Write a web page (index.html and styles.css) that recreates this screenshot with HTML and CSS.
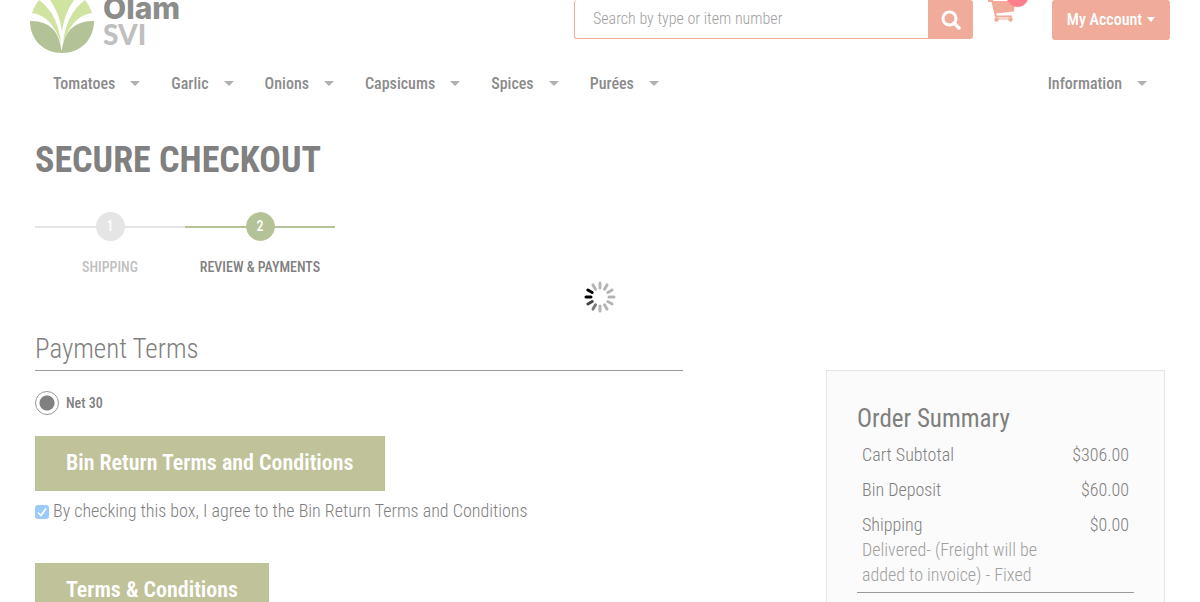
FILE: index.html
```
<!DOCTYPE html>
<html lang="en">
<head>
<meta charset="utf-8">
<title>Secure Checkout</title>
<link rel="stylesheet" href="styles.css">
</head>
<body>
<header class="header">
  <a class="logo" href="#" aria-label="Olam SVI">
    <svg class="logo-mark" viewBox="0 0 64 53" aria-hidden="true">
      <path fill="#cfe4a0" d="M20 0H44Q35 12 32 31Q29 12 20 0ZM9 0Q28 14 31 43Q21 15 2 13Q4 6 9 0ZM55 0Q36 14 33 43Q43 15 62 13Q60 6 55 0Z"/>
      <path fill="#b3c297" d="M0 21Q28 20 31.500 51Q36 20 64 21C64 40 50 53 32 53S0 40 0 21Z"/>
    </svg>
    <span class="logo-text"><span>Olam</span><span class="logo-sub">SVI</span></span>
  </a>
  <form class="search">
    <input class="search-input" type="text" placeholder="Search by type or item number" aria-label="Search by type or item number">
    <button class="search-button" type="button" aria-label="Search">
      <svg width="20" height="20" viewBox="0 0 20 20" fill="none" stroke="#fff" aria-hidden="true"><circle cx="8.500" cy="8.500" r="6.500" stroke-width="3"/><path d="M13 13L18 18" stroke-width="3.500" stroke-linecap="round"/></svg>
    </button>
  </form>
  <a class="cart" href="#" aria-label="Cart">
    <svg width="40" height="23" viewBox="0 0 40 23" aria-hidden="true">
      <path fill="#f0ab9a" d="M0 0H5V2H0ZM4 1H27L26 11.500L8 13.500Z"/>
      <path fill="none" stroke="#f0ab9a" stroke-width="2" d="M4 0L8 16.500H24"/>
      <circle cx="8.500" cy="19.500" r="2.200" fill="#f0ab9a"/><circle cx="22.500" cy="19.500" r="2.200" fill="#f0ab9a"/>
      <path stroke="#f0ab9a" d="M8 19H23"/>
      <circle cx="29.500" cy="-4" r="11" fill="#ff7f8c"/>
    </svg>
  </a>
  <button class="account" type="button">My Account <span class="caret caret-light"></span></button>
</header>
<nav class="nav">
  <a class="nav-item" href="#">Tomatoes<span class="caret"></span></a>
  <a class="nav-item" href="#">Garlic<span class="caret"></span></a>
  <a class="nav-item" href="#">Onions<span class="caret"></span></a>
  <a class="nav-item" href="#">Capsicums<span class="caret"></span></a>
  <a class="nav-item" href="#">Spices<span class="caret"></span></a>
  <a class="nav-item" href="#">Purées<span class="caret"></span></a>
  <a class="nav-item nav-info" href="#">Information<span class="caret"></span></a>
</nav>
<main class="main">
  <h1 class="title">SECURE CHECKOUT</h1>
  <ol class="steps">
    <li class="step"><span class="step-bar"><span class="step-dot">1</span></span>SHIPPING</li>
    <li class="step step-active"><span class="step-bar"><span class="step-dot">2</span></span>REVIEW &amp; PAYMENTS</li>
  </ol>
  <div class="columns">
    <section class="payment">
      <h2 class="section-title">Payment Terms</h2>
      <label class="radio-row"><input class="radio" type="radio" name="terms" checked>Net 30</label>
      <button class="terms-button" type="button">Bin Return Terms and Conditions</button>
      <label class="check-row"><input class="check" type="checkbox" checked>By checking this box, I agree to the Bin Return Terms and Conditions</label>
      <button class="terms-button" type="button">Terms &amp; Conditions</button>
    </section>
    <aside class="summary">
      <h2 class="summary-title">Order Summary</h2>
      <table class="totals">
        <tr><th scope="row">Cart Subtotal</th><td>$306.00</td></tr>
        <tr><th scope="row">Bin Deposit</th><td>$60.00</td></tr>
        <tr><th scope="row">Shipping<span class="note">Delivered- (Freight will be added to invoice) - Fixed</span></th><td>$0.00</td></tr>
      </table>
    </aside>
  </div>
</main>
<div class="loader" role="status" aria-label="Loading">
  <svg width="34" height="34" viewBox="-17 -17 34 34" stroke-width="3" stroke-linecap="round" aria-hidden="true">
    <g stroke="#b5b5b5">
      <path d="M0-9V-14"/><path d="M0-9V-14" transform="rotate(30)"/><path d="M0-9V-14" transform="rotate(60)"/><path d="M0-9V-14" transform="rotate(90)"/><path d="M0-9V-14" transform="rotate(120)"/><path d="M0-9V-14" transform="rotate(150)"/><path d="M0-9V-14" transform="rotate(180)"/><path d="M0-9V-14" transform="rotate(330)"/>
    </g>
    <path stroke="#7d7d7d" d="M0-9V-14" transform="rotate(210)"/>
    <path stroke="#444" d="M0-9V-14" transform="rotate(240)"/>
    <path stroke="#000" d="M0-9V-14" transform="rotate(270)"/>
    <path stroke="#000" d="M0-9V-14" transform="rotate(300)"/>
  </svg>
</div>
</body>
</html>
```
FILE: styles.css
```
* { box-sizing: border-box; }

body {
  margin: 0;
  height: 100vh;
  overflow: hidden;
  background: #fff;
  color: #808080;
  font-family: "Roboto Condensed", "Liberation Sans Narrow", "Liberation Sans", sans-serif;
  font-size: 18px;
  line-height: 25px;
}

button, input { font-family: inherit; }
a { color: inherit; text-decoration: none; }

.header {
  display: flex;
  align-items: flex-start;
  height: 53px;
  padding: 0 30px;
  overflow: hidden;
}

.logo { display: flex; gap: 9px; margin-right: auto; }
.logo-mark { width: 64px; height: 53px; }
.logo-text {
  display: flex;
  flex-direction: column;
  margin-top: -5px;
  color: #8c8c8a;
  font-family: Inter, sans-serif;
  font-size: 30px;
  font-weight: 800;
  line-height: 26px;
}
.logo-sub { color: #bfbfbf; font-family: Lato, sans-serif; font-size: 28px; font-weight: 900; }

.search { display: flex; width: 399px; height: 39px; }
.search-input {
  flex: 1;
  min-width: 0;
  padding: 0 18px 2px;
  border: 1px solid #f0ab9a;
  border-top: 0;
  border-right: 0;
  border-radius: 3px 0 0 3px;
  background: #fff;
  font-size: 16px;
  font-weight: 300;
}
.search-input::placeholder { color: #a0a0a0; opacity: 1; }
.search-button {
  display: grid;
  place-items: center;
  width: 45px;
  padding: 0;
  border: 0;
  border-radius: 0 3px 3px 0;
  background: #f0ab9a;
}
.cart { margin: 0 25px 0 15px; width: 39px; height: 23px; }
.account {
  display: flex;
  align-items: center;
  justify-content: center;
  gap: 5px;
  width: 118px;
  height: 40px;
  padding: 0 0 2px;
  border: 0;
  border-radius: 3px;
  background: #f0ab9a;
  color: #fff;
  font-size: 16px;
  font-weight: 500;
}

.caret {
  border: 5px solid transparent;
  border-top-color: #b0b0b0;
  border-bottom: 0;
}
.caret-light { border-width: 5px 4px 0; border-top-color: #fff; }

.nav {
  display: flex;
  gap: 31px;
  margin-top: 18px;
  padding: 0 53px;
  font-size: 16px;
  font-weight: 500;
  color: #8c8c8c;
}
.nav-item { display: flex; align-items: center; gap: 15px; }
.nav-info { margin-left: auto; }

.main { padding: 0 35px; }
.title { margin: 39px 0 0; font-size: 36px; line-height: 50px; }

.steps {
  display: flex;
  width: 300px;
  margin: 27px 0 0;
  padding: 0;
  list-style: none;
}
.step {
  display: flex;
  flex-direction: column;
  align-items: center;
  gap: 14px;
  width: 150px;
  color: #c0c0c0;
  font-size: 14px;
  font-weight: 500;
  white-space: nowrap;
}
.step-bar {
  display: grid;
  place-items: center;
  width: 100%;
  background: linear-gradient(#e5e5e5, #e5e5e5) center / 100% 2px no-repeat;
}
.step-dot {
  width: 29px;
  height: 29px;
  border-radius: 50%;
  background: #e5e5e5;
  color: #fff;
  font-size: 14px;
  font-weight: 500;
  line-height: 29px;
  text-align: center;
}
.step-active { color: #808080; }
.step-active .step-bar { background-image: linear-gradient(#b3c297, #b3c297); }
.step-active .step-dot { border: 1px solid #c0c29a; background: #b3c297; line-height: 27px; }

.columns { display: flex; justify-content: space-between; align-items: flex-start; margin-top: 53px; }
.payment {
  display: flex;
  flex-direction: column;
  align-items: flex-start;
  width: 648px;
}
.section-title {
  width: 100%;
  margin: 0;
  padding-bottom: 5px;
  border-bottom: 1px solid #999;
  font-size: 27px;
  font-weight: 300;
  line-height: 32px;
}
.radio-row {
  display: flex;
  align-items: center;
  gap: 7px;
  margin: 20px 0 21px;
  font-size: 14px;
  font-weight: 500;
  line-height: 24px;
}
.radio {
  appearance: none;
  width: 24px;
  height: 24px;
  margin: 0;
  border: 1px solid #999;
  border-radius: 50%;
  background: radial-gradient(circle, #808080 7px, #fff 8px);
}
.terms-button {
  height: 55px;
  padding: 0 30px 2px;
  border: 1px solid #b9c497;
  background: #c0c29a;
  color: #fff;
  font-size: 22px;
  font-weight: 600;
}
.check-row { display: flex; align-items: center; gap: 4px; margin: 7px 0 40px; font-weight: 300; }
.check {
  appearance: none;
  width: 14px;
  height: 14px;
  margin: 3px 0 0;
  border-radius: 3px;
  background: #9bcbfb url("data:image/svg+xml,%3Csvg xmlns='http://www.w3.org/2000/svg' viewBox='0 0 14 14'%3E%3Cpath d='M3 7.500L6 10.500L11 3.500' fill='none' stroke='white' stroke-width='1.600'/%3E%3C/svg%3E");
}

.summary {
  width: 339px;
  min-height: 300px;
  margin-top: 37px;
  padding: 31px 30px;
  border: 1px solid #e5e5e5;
  background: #fbfbfb;
}
.summary-title { margin: 0 0 1px; font-size: 25px; font-weight: 400; line-height: 34px; }
.totals { width: 100%; border-collapse: collapse; border-bottom: 1px solid #999; font-size: 18px; }
.totals th, .totals td { padding: 5px; font-weight: 300; text-align: left; vertical-align: top; }
.totals td { text-align: right; }
.note { display: block; max-width: 190px; color: #a0a0a0; }

.loader { position: fixed; inset: 0; display: grid; place-items: center; padding-bottom: 8px; }
```
